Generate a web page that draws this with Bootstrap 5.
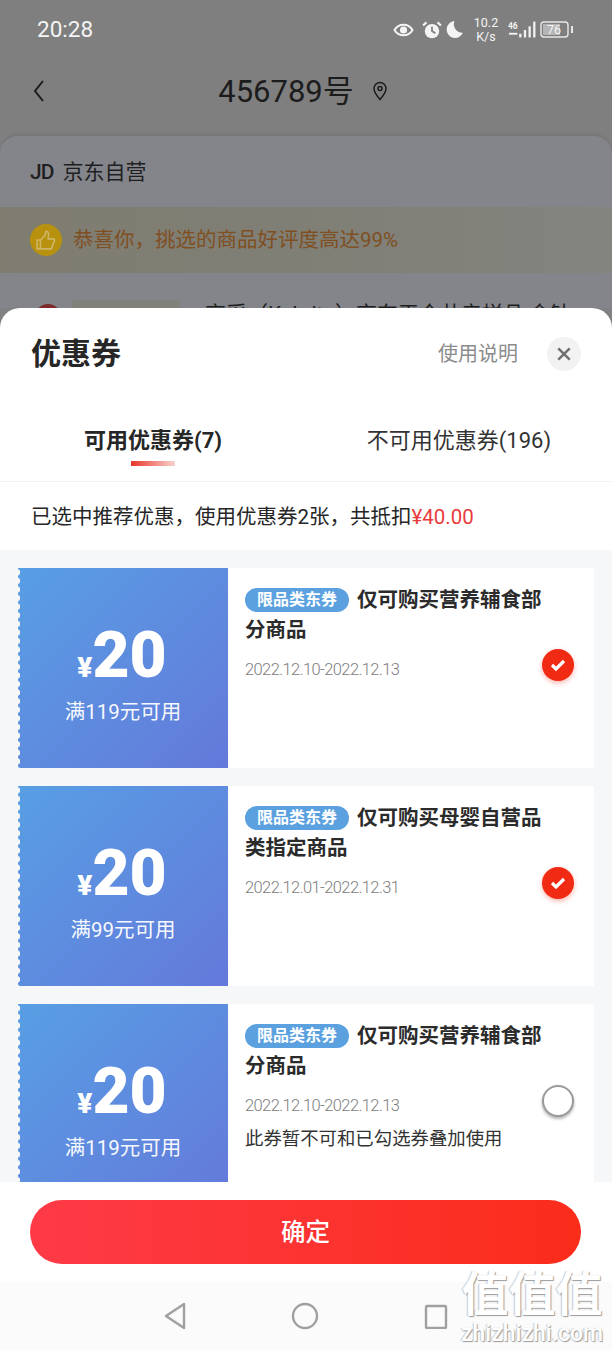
<!DOCTYPE html>
<html lang="zh-CN">
<head>
  <meta charset="UTF-8" />
  <meta name="viewport" content="width=device-width, initial-scale=1" />
  <title>优惠券</title>
  <link href="https://cdn.jsdelivr.net/npm/bootstrap@5.3.3/dist/css/bootstrap.min.css" rel="stylesheet" />
  <style>
    body { width: 612px; height: 1350px; overflow: hidden; background: #808182; font-family: Roboto, "Noto Sans CJK SC", sans-serif; color: #262626; }
    .phone { position: relative; width: 612px; height: 1350px; overflow: hidden; }

    /* dimmed page behind the sheet */
    .dim-page { height: 308px; overflow: hidden; background: #7f7f7f; }
    .status-row { height: 62px; padding: 0 38px 3px 37px; color: #f4f4f4; }
    .status-time { font-size: 22.5px; line-height: 1; }
    .speed-text { width: 28px; font-size: 12.5px; line-height: 14px; text-align: center; }
    .nav-row { height: 70px; padding: 0 6px 12px 0; color: #1c1c1c; }
    .nav-back { left: 32px; top: 17px; }
    .nav-title { font-size: 31px; line-height: 1; margin-right: 18px; }
    .dim-card { margin-top: 4px; height: 180px; background: #83858a; border-radius: 18px 18px 0 0; box-shadow: 0 -2px 3px rgba(0, 0, 0, .08); }
    .shop-row { height: 71px; padding: 3px 0 0 30px; font-size: 21px; color: #1f1f1f; }
    .shop-logo { font-weight: 500; margin-right: 9px; letter-spacing: -1px; }
    .praise-row { height: 66px; padding-left: 30px; background: linear-gradient(90deg, #7f7d70, #807f76 50%, #83847f); color: #7f4f22; font-size: 20.5px; }
    .praise-icon { width: 32px; height: 32px; border-radius: 50%; background: #b8920f; margin-right: 11px; }
    .goods-row { padding: 31px 0 0 35px; }
    .goods-pic { width: 26px; height: 26px; flex: none; border-radius: 50%; background: #7c2a2a; }
    .goods-thumb { width: 108px; height: 20px; flex: none; margin: -4px 25px 0 11px; background: #7f8278; border-radius: 4px; }
    .goods-name { font-size: 21px; line-height: 1; color: #1f1f1f; white-space: nowrap; }

    /* sheet */
    .sheet { height: 1042px; background: #fff; border-radius: 20px 20px 0 0; }
    .sheet-head { height: 92px; padding: 0 31px; }
    .sheet-title { font-size: 30px; font-weight: 700; line-height: 1; }
    .sheet-help { font-size: 20px; color: #8c8c8c; margin-right: 29px; }
    .sheet-close { width: 34px; height: 34px; border-radius: 50%; background: #f2f2f2; }
    .tab-row { height: 82px; border-bottom: 1px solid #f2f2f2; }
    .tab-item { font-size: 22px; line-height: 1; color: #333; padding-top: 30px; }
    .tab-on { font-weight: 700; color: #262626; }
    .tab-line { left: 50%; margin-left: -22px; bottom: 15px; width: 44px; height: 5px; background: linear-gradient(90deg, #e8352a, #f8d3cf); }
    .info-row { height: 68px; padding: 2px 0 0 31px; font-size: 20.5px; color: #262626; }
    .info-row em { font-style: normal; color: #e93b3d; }

    .coupon-list { height: 632px; overflow: hidden; background: #f6f7f8; padding: 18px 18px 0; }
    .coupon-box { height: 200px; margin-bottom: 18px; background: #fff; }
    .coupon-left { position: relative; flex: none; width: 210px; color: #fff; background: linear-gradient(135deg, #589fe4, #6479da); }
    .coupon-left::before { content: ""; position: absolute; left: -1px; top: 0; bottom: 0; width: 4px; background: radial-gradient(circle at 0 50%, #f6f7f8 3px, transparent 3.5px) 0 0 / 4px 8.6px; }
    .coupon-price { line-height: 1; margin-top: 12px; padding-right: 2px; }
    .coupon-yen { font-size: 28px; font-weight: 900; }
    .coupon-num { font-size: 64px; font-weight: 900; }
    .coupon-limit { font-size: 20.5px; margin-top: 12px; line-height: 1.2; opacity: .95; }
    .coupon-right { min-width: 0; padding: 17px 20px 0 17px; }
    .coupon-name { font-size: 20.5px; font-weight: 700; line-height: 30px; color: #2b2b2b; }
    .coupon-tag { display: inline-block; width: 104px; height: 24px; line-height: 24px; border-radius: 12px; background: #5ba1e0; color: #fff; font-size: 16px; font-weight: 700; text-align: center; vertical-align: 2px; margin-right: 8px; }
    .coupon-date { font-size: 16.5px; font-weight: 300; color: #7d7d7d; margin-top: 15px; line-height: 1.2; letter-spacing: -.6px; }
    .coupon-note { font-size: 18.4px; color: #333; margin-top: 12px; line-height: 1.2; }
    .pick-on, .pick-off { width: 32px; height: 32px; border-radius: 50%; flex: none; margin-bottom: 23px; }
    .pick-on { background: #f12a14; box-shadow: 0 2px 5px rgba(241, 42, 20, .35); }
    .pick-off { background: #fff; border: 2px solid #9a9a9a; box-shadow: 0 2px 3px rgba(0, 0, 0, .3); }

    .foot-row { height: 100px; background: #fff; padding: 18px 31px 0 30px; }
    .foot-btn { height: 64px; padding-top: 8px; border: 0; border-radius: 32px; font-size: 24.5px; font-weight: 500; color: #fff; background: linear-gradient(90deg, #fe3a47, #fa2c1a); }
    .sys-bar { height: 68px; background: #fbfbfb; gap: 104px; }

    /* site watermark */
    .mark-wrap { position: absolute; right: 9px; top: 1266px; width: 142px; text-align: center; color: #fff; text-shadow: 1px 1px 1px #9a9a9a, -1px 0 1px #c8c8c8; }
    .mark-top { font-size: 47px; line-height: 58px; font-weight: 700; white-space: nowrap; }
    .mark-bottom { font-size: 23px; line-height: 20px; font-weight: 500; }
  </style>
</head>
<body>
  <div class="phone">
    <div class="dim-page">
      <!-- status bar -->
      <div class="status-row d-flex align-items-center justify-content-between">
        <span class="status-time">20:28</span>
        <div class="d-flex align-items-center">
          <svg width="21" height="16" viewBox="0 0 20 16"><path d="M1 8c4-7 14-7 18 0-4 7-14 7-18 0z" fill="none" stroke="#f4f4f4" stroke-width="2"/><circle cx="10" cy="8" r="3.6" fill="#f4f4f4"/></svg>
          <svg width="20" height="20" viewBox="0 0 18 18" class="ms-2"><circle cx="9" cy="10" r="6.5" fill="#f4f4f4"/><path d="M9 6v4l3 2" stroke="#7f7f7f" stroke-width="1.6" fill="none"/><path d="M1 5l3-3M17 5l-3-3" stroke="#f4f4f4" stroke-width="2"/></svg>
          <svg width="18" height="19" viewBox="0 0 17 18" class="ms-1"><path d="M8 1a8 8 0 1 0 8 11A8 8 0 0 1 8 1z" fill="#f4f4f4"/></svg>
          <div class="speed-text ms-2">10.2<br>K/s</div>
          <svg width="28" height="20" viewBox="0 0 30 20" class="ms-2"><g fill="#f4f4f4"><rect x="12" y="14" width="2.4" height="4"/><rect x="17" y="10" width="2.4" height="8"/><rect x="22" y="6" width="2.4" height="12"/><rect x="27" y="1" width="2.4" height="17"/><rect x="1" y="13" width="9" height="2"/></g><text x="0" y="9" font-size="9" font-weight="700" fill="#f4f4f4">46</text></svg>
          <svg width="34" height="18" viewBox="0 0 34 18" class="ms-1"><rect x="1" y="1" width="27" height="15" rx="3" fill="none" stroke="#e8e8e8" stroke-width="1.4"/><rect x="3" y="3" width="17" height="11" fill="#b5b5b5"/><text x="7" y="13" font-size="12.5" fill="#f4f4f4">76</text><rect x="31" y="5" width="2" height="7" fill="#e8e8e8"/></svg>
        </div>
      </div>
      <!-- title bar -->
      <div class="nav-row position-relative d-flex align-items-center justify-content-center">
        <svg class="nav-back position-absolute" width="13" height="24" viewBox="0 0 13 24"><path d="M11 2L3 12l8 10" fill="none" stroke="#1c1c1c" stroke-width="2"/></svg>
        <span class="nav-title">456789号</span>
        <svg width="16" height="20" viewBox="0 0 16 20"><path d="M8 1.5a6 6 0 0 1 6 6c0 4-6 11-6 11s-6-7-6-11a6 6 0 0 1 6-6z" fill="none" stroke="#1c1c1c" stroke-width="1.5"/><circle cx="8" cy="7.5" r="2" fill="none" stroke="#1c1c1c" stroke-width="1.5"/></svg>
      </div>
      <div class="dim-card">
        <div class="shop-row d-flex align-items-center"><span class="shop-logo">JD</span>京东自营</div>
        <div class="praise-row d-flex align-items-center">
          <span class="praise-icon d-flex align-items-center justify-content-center">
            <svg width="22" height="22" viewBox="0 0 20 20"><path d="M2 10h3v8H2zM5 10l4-4 1-4c2 0 3 2 2 7h5c1 0 1 2 0 3l-2 6H5z" fill="none" stroke="#cdb565" stroke-width="1.5"/></svg>
          </span>
          恭喜你，挑选的商品好评度高达99%
        </div>
        <div class="goods-row d-flex">
          <span class="goods-pic"></span>
          <span class="goods-thumb"></span>
          <span class="goods-name">京采（Kabrita）京东平仓井亲样品 金钻</span>
        </div>
      </div>
    </div>

    <div class="sheet">
      <div class="sheet-head d-flex align-items-center justify-content-between">
        <span class="sheet-title">优惠券</span>
        <div class="d-flex align-items-center">
          <span class="sheet-help">使用说明</span>
          <span class="sheet-close d-flex align-items-center justify-content-center">
            <svg width="16" height="16" viewBox="0 0 14 14"><path d="M2 2l10 10M12 2L2 12" stroke="#707070" stroke-width="2.2"/></svg>
          </span>
        </div>
      </div>
      <div class="tab-row row g-0 text-center">
        <div class="col-6 position-relative tab-item tab-on">可用优惠券(7)<span class="tab-line position-absolute"></span></div>
        <div class="col-6 tab-item">不可用优惠券(196)</div>
      </div>
      <div class="info-row d-flex align-items-center">已选中推荐优惠，使用优惠券2张，共抵扣<em>¥40.00</em></div>

      <div class="coupon-list">
        <div class="coupon-box d-flex">
          <div class="coupon-left d-flex flex-column align-items-center justify-content-center">
            <div class="coupon-price"><span class="coupon-yen">¥</span><span class="coupon-num">20</span></div>
            <div class="coupon-limit">满119元可用</div>
          </div>
          <div class="coupon-right flex-grow-1 d-flex">
            <div class="flex-grow-1">
              <div class="coupon-name"><span class="coupon-tag">限品类东券</span><span>仅可购买营养辅食部</span></div>
              <div class="coupon-name">分商品</div>
              <div class="coupon-date">2022.12.10-2022.12.13</div>
            </div>
            <span class="pick-on align-self-center d-flex align-items-center justify-content-center">
              <svg width="18" height="14" viewBox="0 0 18 14"><path d="M3 7l4 4 8-8" fill="none" stroke="#fff" stroke-width="3.2"/></svg>
            </span>
          </div>
        </div>
        <div class="coupon-box d-flex">
          <div class="coupon-left d-flex flex-column align-items-center justify-content-center">
            <div class="coupon-price"><span class="coupon-yen">¥</span><span class="coupon-num">20</span></div>
            <div class="coupon-limit">满99元可用</div>
          </div>
          <div class="coupon-right flex-grow-1 d-flex">
            <div class="flex-grow-1">
              <div class="coupon-name"><span class="coupon-tag">限品类东券</span><span>仅可购买母婴自营品</span></div>
              <div class="coupon-name">类指定商品</div>
              <div class="coupon-date">2022.12.01-2022.12.31</div>
            </div>
            <span class="pick-on align-self-center d-flex align-items-center justify-content-center">
              <svg width="18" height="14" viewBox="0 0 18 14"><path d="M3 7l4 4 8-8" fill="none" stroke="#fff" stroke-width="3.2"/></svg>
            </span>
          </div>
        </div>
        <div class="coupon-box d-flex">
          <div class="coupon-left d-flex flex-column align-items-center justify-content-center">
            <div class="coupon-price"><span class="coupon-yen">¥</span><span class="coupon-num">20</span></div>
            <div class="coupon-limit">满119元可用</div>
          </div>
          <div class="coupon-right flex-grow-1 d-flex">
            <div class="flex-grow-1">
              <div class="coupon-name"><span class="coupon-tag">限品类东券</span><span>仅可购买营养辅食部</span></div>
              <div class="coupon-name">分商品</div>
              <div class="coupon-date">2022.12.10-2022.12.13</div>
              <div class="coupon-note">此券暂不可和已勾选券叠加使用</div>
            </div>
            <span class="pick-off align-self-center"></span>
          </div>
        </div>
      </div>

      <div class="foot-row"><button class="foot-btn btn w-100" type="button">确定</button></div>
      <div class="sys-bar d-flex align-items-center justify-content-center">
        <svg width="24" height="28" viewBox="0 0 24 28"><path d="M21 2v24L3 14z" fill="none" stroke="#a0a0a0" stroke-width="2.4" stroke-linejoin="round"/></svg>
        <svg width="28" height="28" viewBox="0 0 28 28"><circle cx="14" cy="14" r="12" fill="none" stroke="#a0a0a0" stroke-width="2.4"/></svg>
        <svg width="26" height="26" viewBox="0 0 26 26"><rect x="3" y="3" width="20" height="22" rx="1" fill="none" stroke="#a0a0a0" stroke-width="2.4"/></svg>
      </div>
    </div>

    <div class="mark-wrap">
      <div class="mark-top">值值值</div>
      <div class="mark-bottom">zhizhizhi.com</div>
    </div>
  </div>
  <script src="https://cdn.jsdelivr.net/npm/bootstrap@5.3.3/dist/js/bootstrap.bundle.min.js"></script>
</body>
</html>
